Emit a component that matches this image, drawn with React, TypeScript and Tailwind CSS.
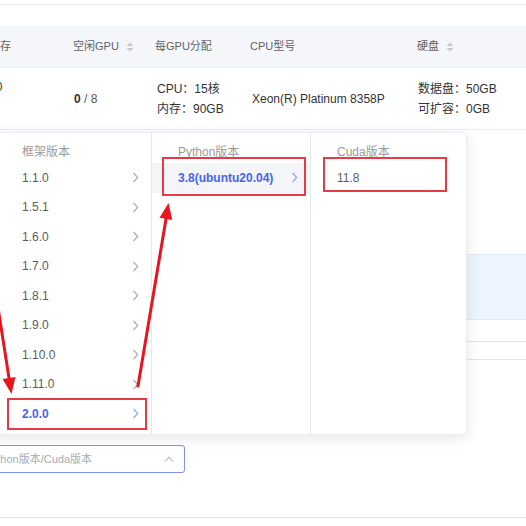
import React from 'react';

const frameworks = ['1.1.0', '1.5.1', '1.6.0', '1.7.0', '1.8.1', '1.9.0', '1.10.0', '1.11.0', '2.0.0'];

const Chevron = ({ active }: { active?: boolean }) => (
  <svg width="7" height="11" viewBox="0 0 7 11" fill="none" stroke={active ? '#8e9ef0' : '#a9a9a9'} strokeWidth="1.1">
    <path d="M1.5 1l4.2 4.5L1.5 10" />
  </svg>
);

const SortIcon = () => (
  <svg width="8" height="10" viewBox="0 0 8 10" fill="#c6c9d0" className="ml-[7px]">
    <path d="M4 0.5L7.5 4H0.5z" />
    <path d="M4 9.5L0.5 6h7z" />
  </svg>
);

const RedBox = ({ className }: { className: string }) => (
  <div className={`pointer-events-none absolute border-2 border-[#e83a44] ${className}`} />
);

export default function App() {
  return (
    <div className="relative h-[526px] w-[526px] overflow-hidden bg-white text-[12px] text-[#333] [font-family:'Liberation_Sans','Noto_Sans_CJK_SC',sans-serif]">
      {/* table + form behind the cascader */}
      <div className="ml-[-11px] w-[560px]">
        <div className="h-[5px] border-b border-[#e6e6e6]" />
        <div className="h-[21px]" />

        {/* header */}
        <div className="flex h-[41px] items-center bg-[#f5f6fa] text-[11px] text-[#606266]">
          <div className="w-[84px]">显存</div>
          <div className="flex w-[82px] items-center">空闲GPU<SortIcon /></div>
          <div className="w-[95px]">每GPU分配</div>
          <div className="w-[165px]">CPU型号</div>
          <div className="flex w-[111px] items-center pl-[2px]">硬盘<SortIcon /></div>
        </div>

        {/* row */}
        <div className="flex h-[63px] items-center border-y border-[#ebeef5] leading-[20px]">
          <div className="w-[84px] self-start pt-[9px]">80</div>
          <div className="w-[82px] pl-[1px] text-[#555]">
            <span className="font-bold text-[#333]">0</span> / 8
          </div>
          <div className="w-[95px] pl-[2px]">
            <div>CPU：15核</div>
            <div>内存：90GB</div>
          </div>
          <div className="w-[165px] pl-[2px]">Xeon(R) Platinum 8358P</div>
          <div className="w-[111px] pl-[3px]">
            <div>数据盘：50GB</div>
            <div>可扩容：0GB</div>
          </div>
        </div>

        <div className="h-[124px]" />
        <div className="h-[66px] border-y border-[#dfe9f7] bg-[#ecf4fd]" />
        <div className="h-[21px]" />
        <div className="h-[18px] border-t border-[#e4e4e4]" />
        <div className="h-[86px] border-t border-[#e4e4e4]" />

        {/* select */}
        <div className="ml-[-69px] flex h-[28px] w-[265px] items-center rounded-[3px] border border-[#7e94ea] pr-[10px] text-[11px] text-[#a8abb2]">
          <span className="w-[171px] shrink-0 whitespace-nowrap text-right">框架版本/Python版本/Cuda版本</span>
          <svg className="ml-auto" width="10" height="6" viewBox="0 0 10 6" fill="none" stroke="#b0b0b0" strokeWidth="1.1">
            <path d="M1 5.5L5 1.2l4 4.3" />
          </svg>
        </div>
        <div className="h-[45px] border-b border-[#e4e4e4]" />
      </div>

      {/* cascader panel */}
      <div className="absolute left-[-5px] top-[132px] flex h-[303px] w-[472px] rounded-[4px] border border-[#ececec] bg-white shadow-[0_3px_14px_rgba(0,0,0,0.1)]">
        <div className="w-[156px] border-r border-[#e8e8e8] pt-[8px]">
          <div className="h-[22px] pl-[26px] leading-[22px] text-[#9a9a9a]">框架版本</div>
          {frameworks.map(f => {
            const active = f === '2.0.0';
            return (
              <div
                key={f}
                className={`flex h-[29.5px] items-center justify-between pl-[26px] pr-[12px] ${active ? 'font-bold text-[#4763ee]' : 'text-[#5c5c5c]'}`}
              >
                <span>{f}</span>
                <Chevron active={active} />
              </div>
            );
          })}
        </div>
        <div className="w-[159px] border-r border-[#e8e8e8] pt-[8px]">
          <div className="h-[22px] pl-[26px] leading-[22px] text-[#9a9a9a]">Python版本</div>
          <div className="flex h-[29.5px] items-center justify-between bg-[#f4f5f9] pl-[26px] pr-[12px] font-bold text-[#4763ee]">
            <span>3.8(ubuntu20.04)</span>
            <Chevron active />
          </div>
        </div>
        <div className="flex-1 pt-[8px]">
          <div className="h-[22px] pl-[26px] leading-[22px] text-[#9a9a9a]">Cuda版本</div>
          <div className="flex h-[29.5px] items-center pl-[26px] text-[#5c5c5c]">11.8</div>
        </div>
      </div>

      {/* annotations */}
      <RedBox className="left-[162px] top-[157px] h-[39px] w-[144px]" />
      <RedBox className="left-[323px] top-[157px] h-[35px] w-[124px]" />
      <RedBox className="left-[7px] top-[398px] h-[32px] w-[140px]" />

      <svg className="pointer-events-none absolute left-0 top-0" width="526" height="526" viewBox="0 0 526 526">
        <g stroke="#e8141e" strokeWidth="3" strokeLinecap="round" fill="#e8141e">
          <line x1="-6" y1="282" x2="9" y2="378" />
          <polygon points="11.5,394 2.6,379 15.4,377" stroke="none" />
          <line x1="138" y1="386" x2="166" y2="219" />
          <polygon points="168.5,203 172.3,220 159.5,217.7" stroke="none" />
        </g>
      </svg>
    </div>
  );
}
